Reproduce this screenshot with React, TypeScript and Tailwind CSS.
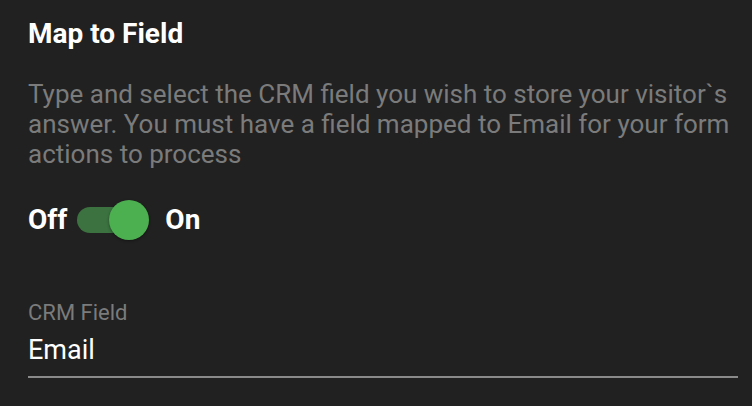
import React from 'react';

const App: React.FC = () => {
  return (
    <div className="w-[752px] h-[406px] bg-[#212121] pl-7 pr-[14px] pt-[18px] font-['Roboto',sans-serif] overflow-hidden">
      <h2 className="text-white text-[28px] font-bold leading-[32px]">Map to Field</h2>
      <p className="mt-[29px] text-[#7b7b7b] text-[26px] leading-[30px]">
        Type and select the CRM field you wish to store your visitor`s answer. You must have a field mapped to Email for your form actions to process
      </p>
      <div className="mt-[30px] flex items-center h-[42px]">
        <span className="text-white text-[28px] font-bold">Off</span>
        <div className="relative ml-[10px] w-16 h-[26px] rounded-full bg-[#3b7240]">
          <div className="absolute -right-2 -top-[7px] w-10 h-10 rounded-full bg-[#4caf50] shadow-[0_1px_3px_rgba(0,0,0,0.4)]" />
        </div>
        <span className="ml-6 text-white text-[28px] font-bold">On</span>
      </div>
      <div className="mt-[59px]">
        <div className="text-[#7b7b7b] text-[22px] leading-[26px]">CRM Field</div>
        <div className="mt-1.5 text-white text-[27px] leading-[36px] border-b-2 border-[#8a8a8a] pb-2">Email</div>
      </div>
    </div>
  );
};

export default App;
